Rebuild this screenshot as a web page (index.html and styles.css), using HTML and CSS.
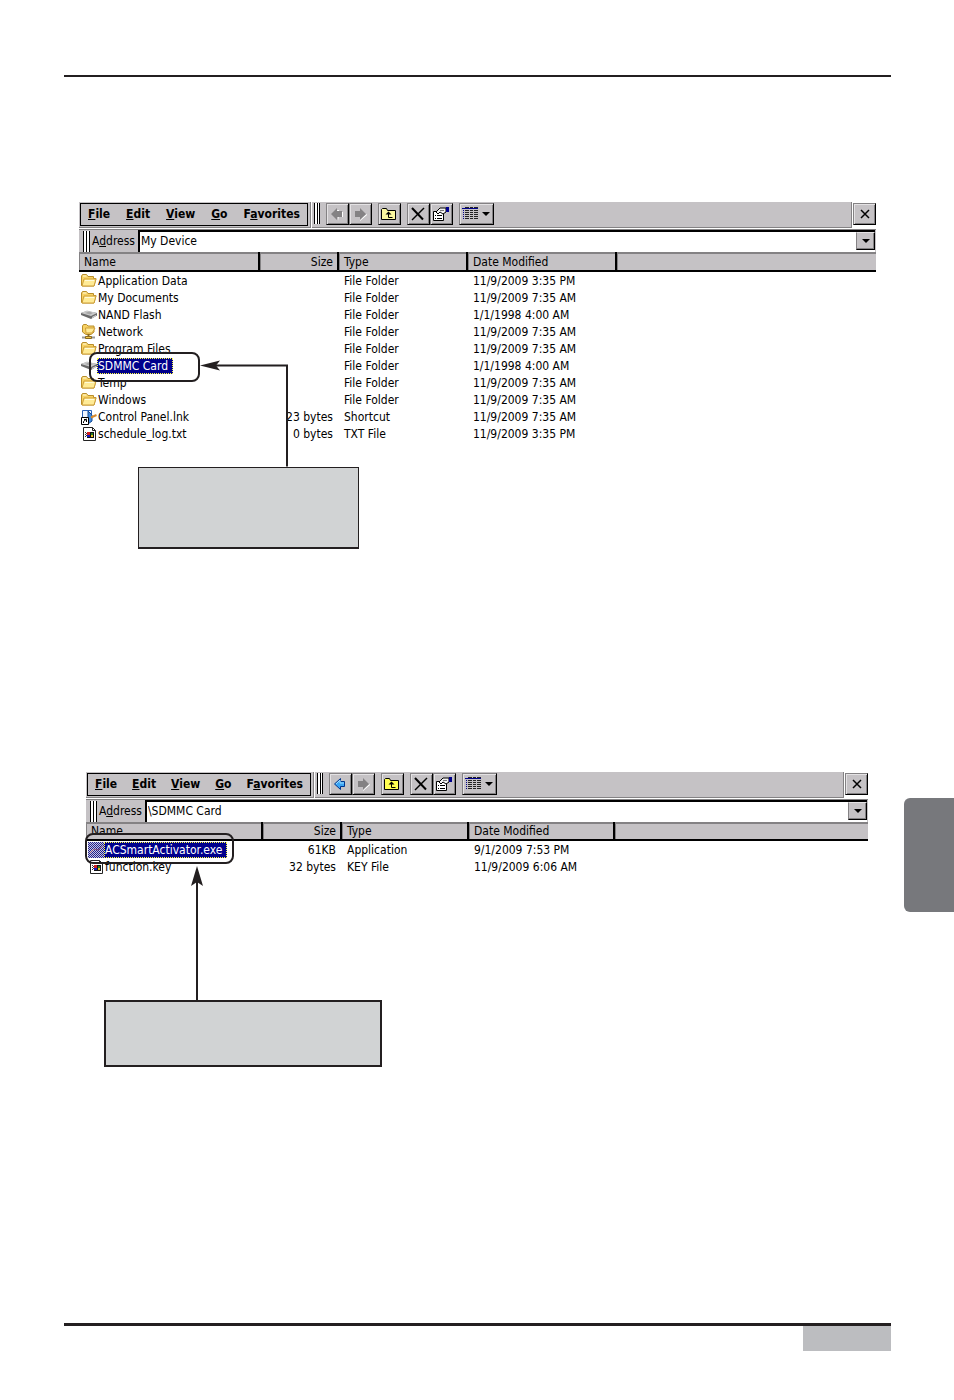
FILE: index.html
```html
<!DOCTYPE html>
<html lang="en">
<head>
  <meta charset="UTF-8" />
  <meta name="viewport" content="width=device-width, initial-scale=1" />
  <title>SDMMC Card</title>
  <link rel="stylesheet" href="styles.css">
</head>
<body>
  <!-- Icons -->
  <svg class="sprite" aria-hidden="true">
    <symbol id="folder" viewBox="0 0 16 16">
      <path d="M.5 12.500V3l1-1.500h4l1.500 2h5.500v2h2.500l-2 7.500h-11.500z" fill="#f7d264" stroke="#b98e2a" />
      <path d="M3 6h12l-2 7H1z" fill="#ffeb96" stroke="#cf9f38" />
      <path d="M2 3h3.500M4 7.500h9" stroke="#fffbd8" />
    </symbol>
    <symbol id="drive" viewBox="0 0 16 16">
      <path d="M0 6l6-2 10 2v2.500l-6 3.500-10-4z" fill="#6a6a6a" />
      <path d="M0 6l6-2.500L16 6l-6 3z" fill="#cacaca" />
      <path d="M4 6l4-1.500L12 6 9 7.500z" fill="#a6a6a6" />
      <path d="M11 10.500l4-2" stroke="#ddd" />
    </symbol>
    <symbol id="network" viewBox="0 0 16 16">
      <path d="M1.500 8V2l1-1.500h3l1.500 1.500h6v6l-3 2.500h-5z" fill="#f7d264" stroke="#b98e2a" />
      <path d="M4.500 4h9.500l-3 5h-6z" fill="#ffeb96" stroke="#cf9f38" />
      <path d="M7.500 10v3" stroke="#8a6a20" stroke-width="2" />
      <path d="M1 13.500h4M10 13.500h4" stroke="#9a9a9a" stroke-width="2" />
      <path d="M4.500 12.500h6v2h-6z" fill="#f1c64c" stroke="#8a6a20" />
    </symbol>
    <symbol id="shortcut" viewBox="0 0 16 16">
      <path d="M1.500 1.500h9v11h-9z" fill="#eef5ff" stroke="#2a62b8" />
      <path d="M7 2l4 4v6l-4 3z" fill="#3f8be0" stroke="#164a92" />
      <path d="M10 8.500l5.500-2.500" stroke="#d78a2c" stroke-width="2" />
      <path d="M.5 8.500h7v7h-7z" fill="#fff" stroke="#000" />
      <path d="M2.500 14v-1.500l3-2.500M3 10.500h2.500V13" fill="none" stroke="#000" />
    </symbol>
    <symbol id="document" viewBox="0 0 16 16">
      <path d="M2.500 1.500h9l3 3v10h-12z" fill="#fff" stroke="#222" />
      <path d="M11.500 1.500v3h3" fill="none" stroke="#222" />
      <path d="M4 6h1v1H4zM4 8h1v1H4zM4 10h1v1H4zM5 7h1v1H5zM5 9h1v1H5z" fill="#333" />
      <path d="M6 6h3v3H6z" fill="#d02020" />
      <path d="M9 6h4v6H6V9h3z" fill="#111" />
      <path d="M10 7h2v2h-2z" fill="#208020" />
      <path d="M6 9h3v2H6z" fill="#1818c0" />
      <path d="M10 9h2v2h-2z" fill="#e8c020" />
    </symbol>
    <symbol id="program" viewBox="0 0 16 16">
      <path d="M0 0h16v16H0z" fill="#c4c4e4" />
      <path d="M0 .5h16M0 2.500h16M0 4.500h16M0 6.500h16M0 8.500h16M0 10.500h16M0 12.500h16M0 14.500h16" stroke="#22208a" stroke-dasharray="1 1" />
      <path d="M1 1.500h15M1 3.500h15M1 5.500h15M1 7.500h15M1 9.500h15M1 11.500h15M1 13.500h15M1 15.500h15" stroke="#22208a" stroke-dasharray="1 1" />
      <path d="M2 11l4-4 4 1 5-4" fill="none" stroke="#86507a" />
    </symbol>
    <symbol id="back" viewBox="0 0 16 16">
      <path d="M8 4h2v2h4v5h-4v4z" fill="#fff" />
      <path d="M2 8l6-6v3h5v6H8v3z" fill="#848284" />
    </symbol>
    <symbol id="back-on" viewBox="0 0 16 16">
      <path d="M2.500 8l6-5.500v3h4v5h-4v3z" fill="#3aa5f5" stroke="#00348c" />
      <path d="M4 8l4-4v3h4" fill="none" stroke="#9bdcff" />
    </symbol>
    <symbol id="forward" viewBox="0 0 16 16">
      <path d="M4 12h4v3l7-6v-1l-6 4z" fill="#fff" />
      <path d="M14 8L8 2v3H3v6h5v3z" fill="#848284" />
    </symbol>
    <symbol id="up" viewBox="0 0 16 16">
      <path d="M.5 13.500V3.500l1-1h4l1 2h8v9z" fill="#fbf8a0" stroke="#000" />
      <path d="M4.500 8.500l3-3 3 3z" />
      <path d="M7.500 6v5.500h4" fill="none" stroke="#000" />
    </symbol>
    <symbol id="up-on" viewBox="0 0 16 16">
      <path d="M.5 13.500V3.500l1-1h4l1 2h8v9z" fill="#ffff52" stroke="#000" />
      <path d="M4.500 8.500l3-3 3 3z" />
      <path d="M7.500 6v5.500h4" fill="none" stroke="#000" />
    </symbol>
    <symbol id="delete" viewBox="0 0 16 16">
      <path d="M2 2l11 11.500" fill="none" stroke="#000" stroke-width="2" />
      <path d="M14 2L2 14" fill="none" stroke="#000" stroke-width="1.500" />
    </symbol>
    <symbol id="properties" viewBox="0 0 16 16">
      <path d="M.5 5.500h10v9H.5z" fill="#fff" stroke="#000" />
      <path d="M2 9.500h1M4 9.500h5M2 12.500h1M4 12.500h5" stroke="#000" />
      <path d="M3 6l4-4h6v4l-3 2-3-2-2 2z" fill="#f2f2f2" stroke="#000" />
      <path d="M7 4.500h4" stroke="#777" />
      <path d="M13 1h3v5h-3z" fill="#00008c" />
    </symbol>
    <symbol id="details" viewBox="0 0 16 16">
      <path d="M3 1.500h4M8 1.500h3M12 1.500h4M3 4.500h4M8 4.500h3M12 4.500h4M3 6.500h4M8 6.500h3M12 6.500h4M3 8.500h4M8 8.500h3M12 8.500h4M3 10.500h4M8 10.500h3M12 10.500h4M3 12.500h4M8 12.500h3M12 12.500h4" stroke="#222" />
      <path d="M0 2.500h16" stroke="#00008c" />
      <path d="M1.500 4v10" stroke="#00008c" stroke-dasharray="1 1" />
    </symbol>
    <symbol id="caret" viewBox="0 0 8 4">
      <path d="M0 0h8L4 4z" />
    </symbol>
    <symbol id="close" viewBox="0 0 10 10">
      <path d="M1 1l8 8M9 1L1 9" fill="none" stroke="#000" stroke-width="1.500" />
    </symbol>
  </svg>

  <div class="page">
    <main>
      <section class="figure">
        <div class="explorer">
          <div class="toolbar">
            <nav class="menu">
              <button><u>F</u>ile</button>
              <button><u>E</u>dit</button>
              <button><u>V</u>iew</button>
              <button><u>G</u>o</button>
              <button>F<u>a</u>vorites</button>
            </nav>
            <div class="tools">
              <span class="grip"></span>
              <div class="group">
                <button class="tool" aria-label="Back" disabled><svg><use href="#back" /></svg></button>
                <button class="tool" aria-label="Forward" disabled><svg><use href="#forward" /></svg></button>
              </div>
              <button class="tool" aria-label="Up"><svg><use href="#up" /></svg></button>
              <div class="group">
                <button class="tool" aria-label="Delete"><svg><use href="#delete" /></svg></button>
                <button class="tool" aria-label="Properties"><svg><use href="#properties" /></svg></button>
              </div>
              <button class="tool views" aria-label="Views"><svg><use href="#details" /></svg><svg class="caret"><use href="#caret" /></svg></button>
            </div>
            <div class="end"><button class="tool" aria-label="Close"><svg class="close"><use href="#close" /></svg></button></div>
          </div>
          <div class="address">
            <span class="grip"></span>
            <label for="address1">A<u>d</u>dress</label>
            <div class="combo">
              <input id="address1" type="text" value="My Device">
              <button class="drop" aria-label="Show addresses"><svg class="caret"><use href="#caret" /></svg></button>
            </div>
          </div>
          <table class="files device">
            <thead>
              <tr><th class="name">Name</th><th class="size">Size</th><th class="type">Type</th><th class="date">Date Modified</th><th></th></tr>
            </thead>
            <tbody>
              <tr><td><svg><use href="#folder" /></svg><span>Application Data</span></td><td></td><td>File Folder</td><td>11/9/2009 3:35 PM</td><td></td></tr>
              <tr><td><svg><use href="#folder" /></svg><span>My Documents</span></td><td></td><td>File Folder</td><td>11/9/2009 7:35 AM</td><td></td></tr>
              <tr><td><svg><use href="#drive" /></svg><span>NAND Flash</span></td><td></td><td>File Folder</td><td>1/1/1998 4:00 AM</td><td></td></tr>
              <tr><td><svg><use href="#network" /></svg><span>Network</span></td><td></td><td>File Folder</td><td>11/9/2009 7:35 AM</td><td></td></tr>
              <tr><td><svg><use href="#folder" /></svg><span>Program Files</span></td><td></td><td>File Folder</td><td>11/9/2009 7:35 AM</td><td></td></tr>
              <tr><td><svg><use href="#drive" /></svg><span class="selected">SDMMC Card</span></td><td></td><td>File Folder</td><td>1/1/1998 4:00 AM</td><td></td></tr>
              <tr><td><svg><use href="#folder" /></svg><span>Temp</span></td><td></td><td>File Folder</td><td>11/9/2009 7:35 AM</td><td></td></tr>
              <tr><td><svg><use href="#folder" /></svg><span>Windows</span></td><td></td><td>File Folder</td><td>11/9/2009 7:35 AM</td><td></td></tr>
              <tr><td><svg><use href="#shortcut" /></svg><span>Control Panel.lnk</span></td><td>23 bytes</td><td>Shortcut</td><td>11/9/2009 7:35 AM</td><td></td></tr>
              <tr><td><svg><use href="#document" /></svg><span>schedule_log.txt</span></td><td>0 bytes</td><td>TXT File</td><td>11/9/2009 3:35 PM</td><td></td></tr>
            </tbody>
          </table>
        </div>
        <div class="callout callout-device"></div>
        <div class="ring ring-device"></div>
        <svg class="arrow arrow-device" viewBox="0 0 88 110">
          <path d="M14 9h73v101" fill="none" stroke="#231f20" stroke-width="2" />
          <path d="M0 9l20-5-4 5 4 5z" fill="#231f20" />
        </svg>
      </section>

      <section class="figure card-figure">
        <div class="explorer">
          <div class="toolbar">
            <nav class="menu">
              <button><u>F</u>ile</button>
              <button><u>E</u>dit</button>
              <button><u>V</u>iew</button>
              <button><u>G</u>o</button>
              <button>F<u>a</u>vorites</button>
            </nav>
            <div class="tools">
              <span class="grip"></span>
              <div class="group">
                <button class="tool" aria-label="Back"><svg><use href="#back-on" /></svg></button>
                <button class="tool" aria-label="Forward" disabled><svg><use href="#forward" /></svg></button>
              </div>
              <button class="tool" aria-label="Up"><svg><use href="#up-on" /></svg></button>
              <div class="group">
                <button class="tool" aria-label="Delete"><svg><use href="#delete" /></svg></button>
                <button class="tool" aria-label="Properties"><svg><use href="#properties" /></svg></button>
              </div>
              <button class="tool views" aria-label="Views"><svg><use href="#details" /></svg><svg class="caret"><use href="#caret" /></svg></button>
            </div>
            <div class="end"><button class="tool" aria-label="Close"><svg class="close"><use href="#close" /></svg></button></div>
          </div>
          <div class="address">
            <span class="grip"></span>
            <label for="address2">A<u>d</u>dress</label>
            <div class="combo">
              <input id="address2" type="text" value="\SDMMC Card">
              <button class="drop" aria-label="Show addresses"><svg class="caret"><use href="#caret" /></svg></button>
            </div>
          </div>
          <table class="files card">
            <thead>
              <tr><th class="name">Name</th><th class="size">Size</th><th class="type">Type</th><th class="date">Date Modified</th><th></th></tr>
            </thead>
            <tbody>
              <tr><td><svg><use href="#program" /></svg><span class="selected">ACSmartActivator.exe</span></td><td>61KB</td><td>Application</td><td>9/1/2009 7:53 PM</td><td></td></tr>
              <tr><td><svg><use href="#document" /></svg><span>function.key</span></td><td>32 bytes</td><td>KEY File</td><td>11/9/2009 6:06 AM</td><td></td></tr>
            </tbody>
          </table>
        </div>
        <div class="callout callout-card"></div>
        <div class="ring ring-card"></div>
        <svg class="arrow arrow-card" viewBox="0 0 12 136">
          <path d="M6 14v122" stroke="#231f20" stroke-width="2" />
          <path d="M6 0l6 20-6-4-6 4z" fill="#231f20" />
        </svg>
      </section>
    </main>

    <footer><div class="page-number"></div></footer>
    <div class="side-tab"></div>
  </div>
</body>
</html>
```
FILE: styles.css
```css
* {
  box-sizing: border-box;
}

body {
  margin: 0;
  background: #fff;
  color: #000;
  font-family: "DejaVu Sans Condensed", "Noto Sans", sans-serif;
  font-size: 12px;
  line-height: 16px;
}

button, input {
  font: inherit;
  color: inherit;
  margin: 0;
  padding: 0;
  border: none;
  border-radius: 0;
  background: none;
}

svg {
  display: block;
  flex: none;
  width: 16px;
  height: 16px;
}

.sprite {
  position: absolute;
  width: 0;
  height: 0;
}

.page {
  position: relative;
  display: flex;
  flex-direction: column;
  min-height: 100vh;
  padding: 75px 63px 49px 64px;
}

main {
  flex: 1;
  border-top: 2px solid #231f20;
  padding: 125px 15px 0;
}

.figure {
  position: relative;
}

.card-figure {
  margin: 223px 8px 0 7px;
}

/* Explorer window */
.explorer {
  background: #c5c2c5;
}

.toolbar {
  display: flex;
  align-items: stretch;
  height: 27px;
  border-bottom: 1px solid #fff;
  box-shadow: inset 0 -1px #848284;
}

.menu {
  display: flex;
  gap: 16px;
  height: 23px;
  margin: 1px 2px 0 1px;
  padding: 0 7px 2px;
  border: 1px solid #000;
  font-weight: bold;
}

.card-figure .menu {
  gap: 15px;
}

.tools {
  flex: 1;
  display: flex;
  align-items: flex-start;
  gap: 6px;
  padding: 1px 0 0 3px;
  border-left: 1px solid #848284;
  box-shadow: inset 1px 0 #fff, inset 0 -1px #848284;
}

.group {
  display: flex;
}

.grip {
  flex: none;
  width: 7px;
  height: 21px;
  border: solid #000;
  border-width: 0 1px;
  background: linear-gradient(to right, #fff 0 2px, #000 2px 3px, #fff 3px 5px);
}

.tools .grip {
  width: 6px;
}

.tool {
  display: flex;
  align-items: center;
  justify-content: center;
  width: 23px;
  height: 22px;
  border: 1px solid;
  border-color: #848284 #000 #000 #848284;
  background: #c5c2c5;
  box-shadow: inset 1px 1px #e4e2e4, inset -1px -1px #848284;
}

.views {
  gap: 4px;
  width: 35px;
}

.caret {
  width: 8px;
  height: 4px;
}

.close {
  width: 10px;
  height: 10px;
}

.end {
  padding: 1px 0 0 1px;
  border-left: 1px solid #848284;
  background: #fff;
}

.address {
  display: flex;
  align-items: center;
  height: 23px;
  padding: 0 1px 0 4px;
  border-top: 1px solid #848284;
}

.address label {
  margin: 0 3px 0 2px;
}

.combo {
  flex: 1;
  display: flex;
  height: 22px;
  border: solid #000;
  border-width: 2px 0 0 2px;
  background: #fff;
}

.combo input {
  flex: 1;
  min-width: 0;
  padding: 0 1px 2px;
  outline: none;
}

.drop {
  display: flex;
  align-items: center;
  justify-content: center;
  width: 19px;
  height: 18px;
  border: 1px solid;
  border-color: #e4e2e4 #000 #000 #848284;
  background: #c5c2c5;
  box-shadow: inset -1px -1px #848284;
}

/* File list */
.files {
  width: 100%;
  table-layout: fixed;
  border-collapse: separate;
  border-spacing: 0;
  background: #fff;
}

.files th {
  height: 20px;
  padding: 2px 5px 0;
  border: solid #000;
  border-width: 0 2px 2px 0;
  background: #c5c2c5;
  box-shadow: inset 1px 2px #848284;
  font-weight: normal;
  text-align: left;
}

.card th {
  height: 19px;
  padding-top: 1px;
}

.files th:last-child {
  border-right: none;
}

.files td {
  height: 17px;
  padding: 0 5px;
  white-space: nowrap;
}

.files td:first-child {
  display: flex;
  align-items: center;
  padding: 0 2px;
}

.files th:nth-child(2) {
  padding-right: 4px;
  text-align: right;
}

.files td:nth-child(2) {
  padding-right: 6px;
  text-align: right;
}

.files td span {
  padding: 0 1px;
}

.files .selected {
  padding-right: 5px;
  background: #00008c;
  color: #fff;
  outline: 1px dotted #ffff40;
  outline-offset: -1px;
}

.device .name { width: 181px; }
.device .size { width: 79px; }
.device .type { width: 129px; }
.device .date { width: 149px; }

.card .name { width: 177px; }
.card .size { width: 79px; }
.card .type { width: 127px; }
.card .date { width: 146px; }

/* Notes drawn over the windows */
.callout {
  border: 2px solid #231f20;
  background: #d1d3d4;
}

.callout-device {
  width: 221px;
  height: 82px;
  margin: 25px 0 0 59px;
  border-width: 1px 1px 2px;
}

.callout-card {
  width: 278px;
  height: 67px;
  margin: 125px 0 0 18px;
}

.ring {
  position: absolute;
  border: 2px solid #231f20;
  border-radius: 8px;
}

.ring-device {
  left: 10px;
  top: 150px;
  width: 111px;
  height: 30px;
}

.ring-card {
  left: -1px;
  top: 61px;
  width: 149px;
  height: 31px;
}

.arrow {
  position: absolute;
}

.arrow-device {
  left: 121px;
  top: 154px;
  width: 88px;
  height: 111px;
}

.arrow-card {
  left: 105px;
  top: 94px;
  width: 12px;
  height: 136px;
}

/* Page furniture */
footer {
  display: flex;
  justify-content: flex-end;
  border-top: 3px solid #231f20;
}

.page-number {
  width: 88px;
  height: 25px;
  background: #bcbdc0;
}

.side-tab {
  position: absolute;
  top: 798px;
  right: 0;
  width: 50px;
  height: 114px;
  border-radius: 6px 0 0 6px;
  background: #77787c;
}
```
